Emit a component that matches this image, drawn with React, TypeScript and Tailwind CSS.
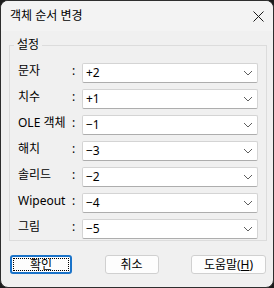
import React from "react";

const rows: [string, string][] = [
  ["문자", "+2"],
  ["치수", "+1"],
  ["OLE 객체", "−1"],
  ["해치", "−3"],
  ["솔리드", "−2"],
  ["Wipeout", "−4"],
  ["그림", "−5"],
];

function Chevron() {
  return (
    <svg width="10" height="6" viewBox="0 0 10 6" className="shrink-0">
      <path d="M1 1 L5 5 L9 1" fill="none" stroke="#5f5f5f" strokeWidth="1" />
    </svg>
  );
}

export default function App() {
  const font = { fontFamily: '"Noto Sans", "Noto Sans CJK KR", sans-serif' };
  return (
    <div className="w-[274px] h-[288px] bg-[#1c1c1c]" style={font}>
      <div className="w-[274px] h-[288px] rounded-[8px] border border-[#2e2e2e] bg-[#f0f0f0] overflow-hidden flex flex-col">
        <div className="h-[30px] bg-[#f3f3f3] flex items-center justify-between pl-[9px] pr-[9px] shrink-0">
          <span className="text-[12px] text-black leading-none">객체 순서 변경</span>
          <svg width="11" height="11" viewBox="0 0 11 11">
            <path d="M0.5 0.5 L10.5 10.5 M10.5 0.5 L0.5 10.5" stroke="#1a1a1a" strokeWidth="1" />
          </svg>
        </div>
        <fieldset className="ml-[8px] mr-[6px] mt-[6px] border border-[#dcdcdc] p-0 pb-[1px]">
          <legend className="ml-[4px] px-[3px] text-[12px] leading-[16px] text-black">설정</legend>
          <div className="grid grid-cols-[54px_10px_1fr] gap-y-[6px] pl-[8px] pr-[8px] pt-[10px]">
            {rows.map(([label, value]) => (
              <React.Fragment key={label}>
                <div className="h-[20px] text-[12px] leading-[16px] text-black whitespace-nowrap">{label}</div>
                <div className="h-[20px] text-[12px] leading-[16px] text-black">:</div>
                <div className="h-[20px] bg-white border border-[#d4d4d4] border-b-[#adadad] rounded-[2px] flex items-center justify-between pl-[3px] pr-[4px]">
                  <span className="text-[12px] leading-none text-black">{value}</span>
                  <Chevron />
                </div>
              </React.Fragment>
            ))}
          </div>
        </fieldset>
        <div className="flex items-center mt-[14px] pl-[9px] pr-[7px] justify-between">
          <button className="w-[62px] h-[19px] rounded-[3px] border-2 border-[#1a73c9] bg-[#fdfdfd] p-[1px] flex">
            <span className="flex-1 border border-dotted border-black flex items-center justify-center text-[12px] leading-none text-black">확인</span>
          </button>
          <button className="w-[54px] h-[19px] rounded-[3px] border border-[#d0d0d0] bg-[#fdfdfd] flex items-center justify-center text-[12px] leading-none text-black">취소</button>
          <button className="w-[75px] h-[19px] rounded-[3px] border border-[#d0d0d0] bg-[#fdfdfd] flex items-center justify-center text-[12px] leading-none text-black">
            도움말(<span className="underline">H</span>)
          </button>
        </div>
      </div>
    </div>
  );
}
